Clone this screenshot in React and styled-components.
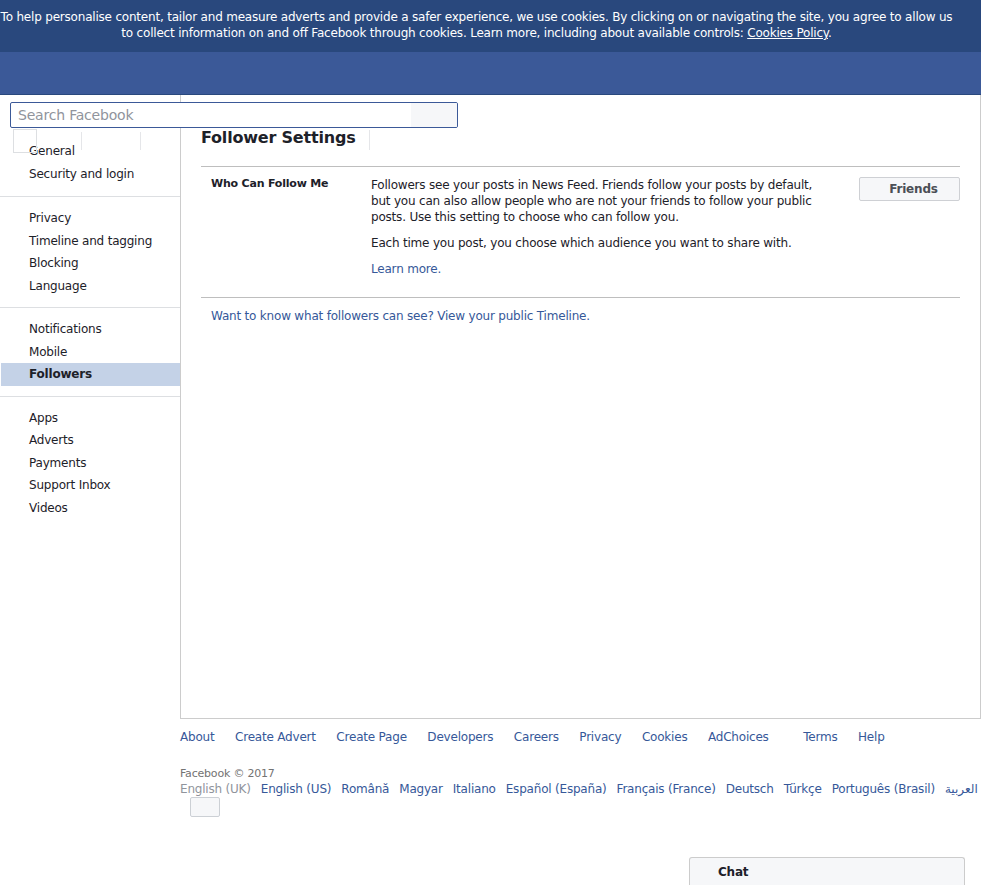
import React from "react";
import styled, { createGlobalStyle } from "styled-components";

const GlobalStyle = createGlobalStyle`
  html, body { margin: 0; padding: 0; background: #fff; }
  body {
    font-family: "DejaVu Sans", "Noto Sans", sans-serif;
    font-size: 12px;
    letter-spacing: -0.2px;
    color: #1d2129;
  }
  * { box-sizing: border-box; }
`;

const Banner = styled.div`
  height: 52px;
  background: #29487d;
  color: #fff;
  text-align: center;
  padding: 9px 28px 0 0;
  line-height: 16px;
  font-size: 12px;
  a { color: #fff; text-decoration: underline; }
`;

const BlueBar = styled.div`
  height: 43px;
  background: #3b5998;
  border-bottom: 1px solid #29487d;
`;

const Content = styled.div`
  position: relative;
  display: flex;
`;

const SearchBox = styled.div`
  position: absolute;
  top: 7px;
  left: 10px;
  width: 448px;
  height: 26px;
  border: 1px solid #3b5998;
  border-radius: 2px;
  background: #fff;
  display: flex;
  overflow: hidden;
  z-index: 2;
`;

const SearchInput = styled.div`
  flex: 1;
  padding-left: 7px;
  line-height: 24px;
  font-size: 14px;
  color: #90949c;
`;

const SearchButton = styled.div`
  width: 46px;
  background: #f6f7f9;
`;

const Ghosts = styled.div`
  position: absolute;
  top: 34px;
  left: 13px;
  display: flex;
  align-items: center;
  z-index: 1;
`;

const GhostSquare = styled.div`
  width: 24px;
  height: 24px;
  border: 1px solid #dddfe2;
`;

const GhostLine = styled.div`
  width: 1px;
  height: 18px;
  background: #e5e6e9;
  margin-left: ${(p) => p.$gap}px;
`;

const Sidebar = styled.nav`
  width: 180px;
  flex: none;
  padding-top: 36px;
`;

const Section = styled.div`
  padding: ${(p) => (p.$first ? "9px 0 11px" : "10px 0 10px")};
  border-top: ${(p) => (p.$first ? "none" : "1px solid #dddfe2")};
`;

const NavItem = styled.div`
  height: 22.5px;
  line-height: 22.5px;
  padding-left: 28px;
  margin-left: 1px;
  font-size: 12px;
  color: #1d2129;
  font-weight: ${(p) => (p.$active ? "bold" : "normal")};
  background: ${(p) => (p.$active ? "#c4d2e7" : "transparent")};
`;

const Main = styled.main`
  flex: 1;
  height: 624px;
  border: 1px solid #ccc;
  border-top: none;
  padding: 33px 20px 0 20px;
`;

const Header = styled.div`
  display: flex;
  align-items: center;
  height: 20px;
  margin-bottom: 18px;
`;

const Title = styled.h2`
  margin: 0;
  font-size: 16px;
  font-weight: bold;
  line-height: 20px;
  color: #1d2129;
`;

const HeaderDivider = styled.div`
  width: 1px;
  height: 20px;
  background: #e5e6e9;
  margin-left: 14px;
  margin-top: 4px;
`;

const SettingRow = styled.div`
  display: flex;
  border-top: 1px solid #bebebe;
  border-bottom: 1px solid #bebebe;
  padding: 10px 0 20px 10px;
`;

const Label = styled.div`
  width: 160px;
  flex: none;
  font-size: 11px;
  font-weight: bold;
  line-height: 14px;
  color: #1d2129;
`;

const Description = styled.div`
  width: 456px;
  flex: none;
  line-height: 16px;
  p { margin: 0 0 10px; }
  p:last-child { margin-bottom: 0; }
`;

const Link = styled.a`
  color: #365899;
  text-decoration: none;
  cursor: pointer;
`;

const ButtonCol = styled.div`
  flex: 1;
  display: flex;
  justify-content: flex-end;
`;

const AudienceButton = styled.button`
  width: 101px;
  height: 24px;
  margin-top: 0;
  background: #f6f7f9;
  border: 1px solid #ced0d4;
  border-radius: 2px;
  font-family: inherit;
  letter-spacing: inherit;
  font-size: 12px;
  font-weight: bold;
  color: #4b4f56;
  padding: 0 0 0 8px;
`;

const Footnote = styled.div`
  padding: 10px 0 0 10px;
  line-height: 16px;
`;

const Footer = styled.footer`
  margin-left: 180px;
  padding-top: 10px;
`;

const FooterLinks = styled.div`
  display: flex;
  line-height: 16px;
  gap: 20.5px;
`;

const AdIcon = styled.span`
  display: inline-block;
  width: 14px;
`;

const Copyright = styled.div`
  margin-top: 22px;
  font-size: 11px;
  line-height: 14px;
  color: #737373;
`;

const Langs = styled.div`
  display: flex;
  gap: 10px;
  line-height: 16px;
  white-space: nowrap;
`;

const CurrentLang = styled.span`
  color: #90949c;
`;

const AddLang = styled.div`
  width: 30px;
  height: 20px;
  margin: 0 0 0 10px;
  background: #f6f7f9;
  border: 1px solid #ccd0d5;
  border-radius: 2px;
`;

const ChatTab = styled.div`
  position: fixed;
  right: 16px;
  bottom: 0;
  width: 276px;
  height: 28px;
  background: #f6f7f9;
  border: 1px solid #ccc;
  border-bottom: none;
  border-radius: 3px 3px 0 0;
  padding: 6px 0 0 28px;
  font-weight: bold;
  font-size: 12px;
  line-height: 16px;
  color: #1d2129;
`;

const sections = [
  ["General", "Security and login"],
  ["Privacy", "Timeline and tagging", "Blocking", "Language"],
  ["Notifications", "Mobile", "Followers"],
  ["Apps", "Adverts", "Payments", "Support Inbox", "Videos"],
];

const footerLinks = [
  "About",
  "Create Advert",
  "Create Page",
  "Developers",
  "Careers",
  "Privacy",
  "Cookies",
  "AdChoices",
  "Terms",
  "Help",
];

const languages = [
  "English (US)",
  "Română",
  "Magyar",
  "Italiano",
  "Español (España)",
  "Français (France)",
  "Deutsch",
  "Türkçe",
  "Português (Brasil)",
  "العربية",
];

export default function App() {
  return (
    <>
      <GlobalStyle />
      <Banner>
        To help personalise content, tailor and measure adverts and provide a safer experience, we use cookies. By clicking on or navigating the site, you agree to allow us
        <br />
        to collect information on and off Facebook through cookies. Learn more, including about available controls: <a>Cookies Policy</a>.
      </Banner>
      <BlueBar />
      <Content>
        <SearchBox>
          <SearchInput>Search Facebook</SearchInput>
          <SearchButton />
        </SearchBox>
        <Ghosts>
          <GhostSquare />
          <GhostLine $gap={44} />
          <GhostLine $gap={58} />
        </Ghosts>
        <Sidebar>
          {sections.map((items, i) => (
            <Section key={i} $first={i === 0}>
              {items.map((item) => (
                <NavItem key={item} $active={item === "Followers"}>
                  {item}
                </NavItem>
              ))}
            </Section>
          ))}
        </Sidebar>
        <Main>
          <Header>
            <Title>Follower Settings</Title>
            <HeaderDivider />
          </Header>
          <SettingRow>
            <Label>Who Can Follow Me</Label>
            <Description>
              <p>
                Followers see your posts in News Feed. Friends follow your posts by default, but you can also allow people who are not your friends to follow your public posts. Use this setting to choose who can follow you.
              </p>
              <p>Each time you post, you choose which audience you want to share with.</p>
              <p>
                <Link>Learn more.</Link>
              </p>
            </Description>
            <ButtonCol>
              <AudienceButton>Friends</AudienceButton>
            </ButtonCol>
          </SettingRow>
          <Footnote>
            <Link>Want to know what followers can see? View your public Timeline.</Link>
          </Footnote>
        </Main>
      </Content>
      <Footer>
        <FooterLinks>
          {footerLinks.map((l) => (
            <Link key={l}>
              {l}
              {l === "AdChoices" && <AdIcon />}
            </Link>
          ))}
        </FooterLinks>
        <Copyright>Facebook © 2017</Copyright>
        <Langs>
          <CurrentLang>English (UK)</CurrentLang>
          {languages.map((l) => (
            <Link key={l}>{l}</Link>
          ))}
        </Langs>
        <AddLang />
      </Footer>
      <ChatTab>Chat</ChatTab>
    </>
  );
}
